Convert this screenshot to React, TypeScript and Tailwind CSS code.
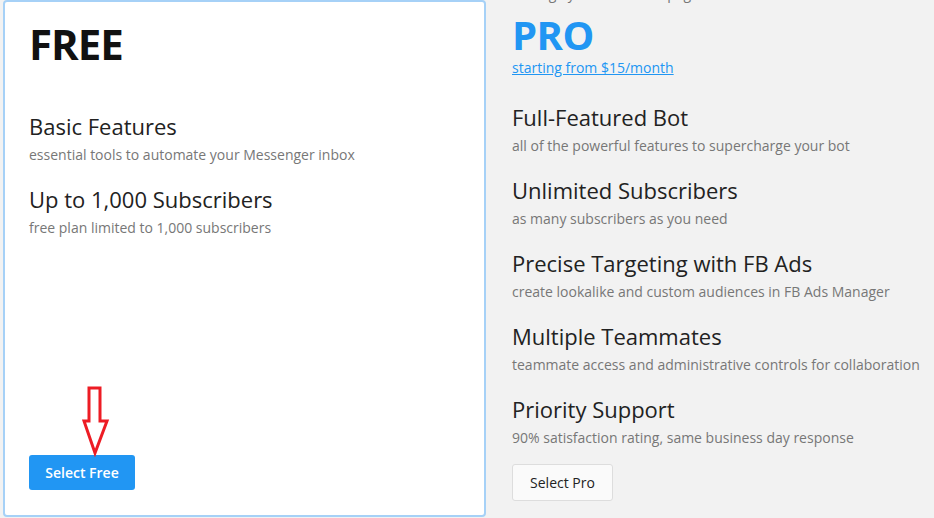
import React from 'react';

const freeFeatures = [
    { title: 'Basic Features', desc: 'essential tools to automate your Messenger inbox' },
    { title: 'Up to 1,000 Subscribers', desc: 'free plan limited to 1,000 subscribers' },
];

const proFeatures = [
    { title: 'Full-Featured Bot', desc: 'all of the powerful features to supercharge your bot' },
    { title: 'Unlimited Subscribers', desc: 'as many subscribers as you need' },
    { title: 'Precise Targeting with FB Ads', desc: 'create lookalike and custom audiences in FB Ads Manager' },
    { title: 'Multiple Teammates', desc: 'teammate access and administrative controls for collaboration' },
    { title: 'Priority Support', desc: '90% satisfaction rating, same business day response' },
];

function Feature({ title, desc }: { title: string; desc: string }) {
    return (
        <div className="mb-[20px]">
            <div className="text-[22px] leading-[28px] text-[#222]">{title}</div>
            <div className="text-[14px] leading-[20px] mt-[5px] text-[#777] whitespace-nowrap">{desc}</div>
        </div>
    );
}

// red hand-drawn arrow pointing at the free button
function DownArrow() {
    return (
        <svg width="28" height="72" viewBox="0 0 28 72" className="absolute left-[82px] top-[385px]">
            <path
                d="M7 3 H18 V36 H25 L13 68 L2 36 H7 Z"
                fill="none"
                stroke="#ed1c24"
                strokeWidth="3"
                strokeLinejoin="miter"
            />
        </svg>
    );
}

export default function App() {
    return (
        <div className="relative h-[518px] w-[934px] overflow-hidden bg-[#f2f2f2] flex font-['Open_Sans',sans-serif]">
            <div className="ml-[3px] w-[483px] h-[517px] box-border border-2 border-[#a6d1f7] rounded-[4px] bg-white pl-[24px] flex flex-col">
                <div className="mt-[21px] text-[42px] leading-none font-bold tracking-[-1px] text-[#111]">FREE</div>
                <div className="mt-[47px]">
                    {freeFeatures.map((f) => <Feature key={f.title} {...f} />)}
                </div>
                <button
                    type="button"
                    className="mt-auto mb-[25px] w-[106px] h-[35px] rounded-[3px] bg-[#2196f3] text-white text-[14px] font-semibold"
                >
                    Select Free
                </button>
            </div>

            <div className="pl-[26px] flex flex-col">
                <div className="-mt-[16px] text-[14px] leading-[20px] text-[#777]">Manage your Facebook page</div>
                <div className="mt-[11px] text-[40px] leading-none font-bold tracking-[-0.5px] text-[#2196f3]">PRO</div>
                <a href="#" className="mt-[3px] text-[14px] leading-[20px] text-[#2196f3] underline">
                    starting from $15/month
                </a>
                <div className="mt-[25px]">
                    {proFeatures.map((f) => <Feature key={f.title} {...f} />)}
                </div>
                <button
                    type="button"
                    className="-mt-[4px] w-[101px] h-[37px] rounded-[3px] border border-[#ddd] bg-[#fafafa] text-[#222] text-[14px]"
                >
                    Select Pro
                </button>
            </div>

            <DownArrow />
        </div>
    );
}
